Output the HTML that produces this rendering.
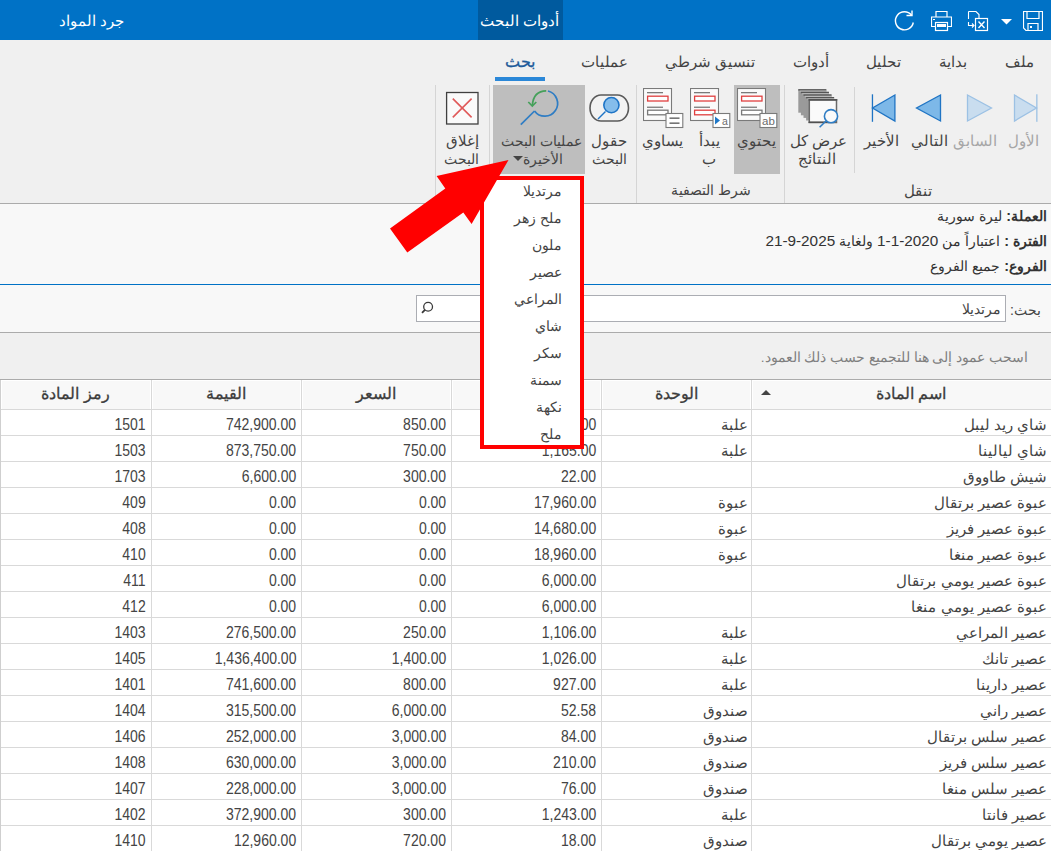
<!DOCTYPE html>
<html><head><meta charset="utf-8"><style>
html,body{margin:0;padding:0;width:1051px;height:851px;overflow:hidden;background:#fff;position:relative;font-family:'Liberation Sans',sans-serif;}
.t{position:absolute;white-space:nowrap;direction:rtl;}
.n{position:absolute;white-space:nowrap;font-size:16px;line-height:18px;color:#444;transform:scaleX(0.875);transform-origin:100% 50%;}
</style></head><body>
<div style="position:absolute;left:0px;top:0px;width:1051px;height:40px;background:#0072C6"></div><div style="position:absolute;left:478px;top:0px;width:85px;height:40px;background:#005A9E"></div><div class="t" style="right:492px;top:12px;font-size:15px;line-height:17px;color:#fff;font-weight:normal;">أدوات البحث</div><div class="t" style="right:927px;top:13px;font-size:14.6px;line-height:16.6px;color:#fff;font-weight:normal;">جرد المواد</div><svg style="position:absolute;left:1023px;top:11px" width="20" height="20" viewBox="0 0 20 20"><path d="M0.5 0.5H19.5V19.5H3L0.5 17Z M4 0.5V7.5H16V0.5 M5 19.5V12.5H15V19.5" fill="none" stroke="#fff" stroke-width="1.2"/><rect x="7" y="15" width="2" height="2" fill="#fff"/></svg><svg style="position:absolute;left:1001px;top:19px" width="11" height="6" viewBox="0 0 11 6"><path d="M0 0H11L5.5 5.5Z" fill="#fff"/></svg><svg style="position:absolute;left:967px;top:10px" width="22" height="22" viewBox="0 0 22 22"><path d="M1.5 1.5H9L12 4.5V9" fill="none" stroke="#fff" stroke-width="1.1"/><path d="M1.5 1.5V9" stroke="#fff" stroke-width="1.1"/><path d="M1.5 12V15.5H6" fill="none" stroke="#fff" stroke-width="1.1"/><path d="M5 13.5L7 15.5L5 17.5" fill="none" stroke="#fff" stroke-width="1.1"/><rect x="8.5" y="8.5" width="12" height="12" fill="#0072C6" stroke="#fff" stroke-width="1.2"/><path d="M11.5 11.5L17.5 18M17.5 11.5L11.5 18" stroke="#fff" stroke-width="1.4"/></svg><svg style="position:absolute;left:931px;top:11px" width="21" height="21" viewBox="0 0 21 21"><path d="M5 6V0.5H16V6" fill="none" stroke="#fff" stroke-width="1.2"/><path d="M4 15.5H0.5V6H20.5V15.5H17" fill="none" stroke="#fff" stroke-width="1.2"/><rect x="4.5" y="11.5" width="12" height="8" fill="none" stroke="#fff" stroke-width="1.2"/><rect x="6" y="13" width="9" height="3" fill="#fff"/><rect x="2" y="8" width="2" height="1" fill="#fff"/></svg><svg style="position:absolute;left:893px;top:10px" width="23" height="23" viewBox="0 0 23 23"><path d="M18.5 5.2A9 9 0 1 0 20.3 12.5" fill="none" stroke="#fff" stroke-width="1.4"/><path d="M13.5 5.5H19V0.5" fill="none" stroke="#fff" stroke-width="1.4"/></svg><div style="position:absolute;left:0px;top:40px;width:1051px;height:163px;background:#F0F0F0"></div><div style="position:absolute;left:0px;top:203px;width:1051px;height:1px;background:#ABABAB"></div><div class="t" style="right:17px;top:53px;font-size:15px;line-height:17px;color:#444;font-weight:normal;">ملف</div><div class="t" style="right:84px;top:53px;font-size:15px;line-height:17px;color:#444;font-weight:normal;">بداية</div><div class="t" style="right:150px;top:53px;font-size:15px;line-height:17px;color:#444;font-weight:normal;">تحليل</div><div class="t" style="right:222px;top:53px;font-size:15px;line-height:17px;color:#444;font-weight:normal;">أدوات</div><div class="t" style="right:296px;top:53px;font-size:15px;line-height:17px;color:#444;font-weight:normal;">تنسيق شرطي</div><div class="t" style="right:423px;top:53px;font-size:15px;line-height:17px;color:#444;font-weight:normal;">عمليات</div><div class="t" style="right:516px;top:53px;font-size:15.5px;line-height:17.5px;color:#1E5B9A;font-weight:normal;-webkit-text-stroke:0.3px #1E5B9A;">بحث</div><div style="position:absolute;left:495px;top:77px;width:50px;height:4px;background:#2B88D8"></div><div style="position:absolute;left:784px;top:85px;width:1px;height:118px;background:#D5D5D5"></div><div style="position:absolute;left:636px;top:85px;width:1px;height:118px;background:#D5D5D5"></div><div style="position:absolute;left:489px;top:85px;width:1px;height:118px;background:#D5D5D5"></div><div style="position:absolute;left:435px;top:85px;width:1px;height:118px;background:#D5D5D5"></div><div style="position:absolute;left:854px;top:87px;width:1px;height:86px;background:#D5D5D5"></div><svg style="position:absolute;left:1013px;top:94px" width="27" height="29" viewBox="0 0 27 29"><path d="M1.5 1L23.5 14L1.5 27Z" fill="#C9DDEF" stroke="#9CC1E4" stroke-width="1.3"/><rect x="23.2" y="0.3" width="1.3" height="27.5" fill="#9CC1E4"/></svg><svg style="position:absolute;left:966px;top:94px" width="27" height="29" viewBox="0 0 27 29"><path d="M1.5 1L25.5 14L1.5 27Z" fill="#C9DDEF" stroke="#9CC1E4" stroke-width="1.3"/></svg><svg style="position:absolute;left:915px;top:94px" width="27" height="29" viewBox="0 0 27 29"><path d="M25.5 1L1.5 14L25.5 27Z" fill="#7DB8E8" stroke="#1F74C4" stroke-width="1.3"/></svg><svg style="position:absolute;left:871px;top:94px" width="27" height="29" viewBox="0 0 27 29"><path d="M23.9 1L1.5 14L23.9 27Z" fill="#7DB8E8" stroke="#1F74C4" stroke-width="1.3"/><rect x="0.8" y="0.3" width="1.3" height="27.5" fill="#1F74C4"/></svg><div class="t" style="right:12px;top:132px;font-size:15px;line-height:17px;color:#A6A6A6;font-weight:normal;">الأول</div><div class="t" style="right:54px;top:132px;font-size:15px;line-height:17px;color:#A6A6A6;font-weight:normal;">السابق</div><div class="t" style="right:103px;top:132px;font-size:15px;line-height:17px;color:#444;font-weight:normal;">التالي</div><div class="t" style="right:152px;top:132px;font-size:15px;line-height:17px;color:#444;font-weight:normal;">الأخير</div><div class="t" style="right:119px;top:182px;font-size:15px;line-height:17px;color:#444;font-weight:normal;">تنقل</div><svg style="position:absolute;left:794px;top:85px" width="50" height="45" viewBox="0 0 50 45"><rect x="4.3" y="4.2" width="28" height="23.5" fill="#9A9A9A"/><rect x="4.3" y="4.2" width="28" height="1.4" fill="#555"/><rect x="5.6" y="5.6" width="26.7" height="1.1" fill="#BDBDBD"/><rect x="6.9" y="6.8" width="28" height="23.5" fill="#9A9A9A"/><rect x="6.9" y="6.8" width="28" height="1.4" fill="#555"/><rect x="8.2" y="8.2" width="26.7" height="1.1" fill="#BDBDBD"/><rect x="9.5" y="9.4" width="28" height="23.5" fill="#9A9A9A"/><rect x="9.5" y="9.4" width="28" height="1.4" fill="#555"/><rect x="10.8" y="10.8" width="26.7" height="1.1" fill="#BDBDBD"/><rect x="12.1" y="12.0" width="28" height="23.5" fill="#9A9A9A"/><rect x="12.1" y="12.0" width="28" height="1.4" fill="#555"/><rect x="13.4" y="13.4" width="26.7" height="1.1" fill="#BDBDBD"/><rect x="15.3" y="14.9" width="27.2" height="22.6" fill="#FAFAFA" stroke="#6A6A6A" stroke-width="1.5"/><rect x="14.5" y="14.1" width="28.8" height="1.5" fill="#505050"/><rect x="14.5" y="36.5" width="20" height="1.5" fill="#505050"/><circle cx="37" cy="31.2" r="6.6" fill="#FAFAFA" stroke="#2F7DC4" stroke-width="1.6"/><path d="M32 36L25.6 42.3" stroke="#2F7DC4" stroke-width="1.6"/></svg><div class="t" style="right:204px;top:132px;font-size:15px;line-height:17px;color:#444;font-weight:normal;">عرض كل</div><div class="t" style="right:215px;top:150px;font-size:15px;line-height:17px;color:#444;font-weight:normal;">النتائج</div><div style="position:absolute;left:734px;top:85px;width:46px;height:89px;background:#BEBEBE"></div><svg style="position:absolute;left:737px;top:88px" width="42" height="42" viewBox="0 0 42 42"><rect x="0.5" y="0.5" width="28" height="32" fill="#FAFAFA" stroke="#7A7A7A" stroke-width="1.1"/>
<rect x="4" y="4" width="16" height="1.3" fill="#7A7A7A"/>
<rect x="4.6" y="8.2" width="20.4" height="4.8" fill="#fff" stroke="#E04040" stroke-width="1.3"/>
<rect x="4" y="18.6" width="16" height="1.3" fill="#7A7A7A"/>
<rect x="4.6" y="22.2" width="20.4" height="4.6" fill="#fff" stroke="#7A7A7A" stroke-width="1.3"/>
<rect x="23" y="25.5" width="16.8" height="14" fill="#fff" stroke="#7A7A7A" stroke-width="1.1"/><text x="31.4" y="37" font-size="11.5" text-anchor="middle" fill="#6A6A6A" font-family="Liberation Sans">ab</text></svg><svg style="position:absolute;left:690px;top:88px" width="42" height="42" viewBox="0 0 42 42"><rect x="0.5" y="0.5" width="28" height="32" fill="#FAFAFA" stroke="#7A7A7A" stroke-width="1.1"/>
<rect x="4" y="4" width="16" height="1.3" fill="#7A7A7A"/>
<rect x="4.6" y="8.2" width="20.4" height="4.8" fill="#fff" stroke="#E04040" stroke-width="1.3"/>
<rect x="4" y="18.6" width="16" height="1.3" fill="#7A7A7A"/>
<rect x="4.6" y="22.2" width="20.4" height="4.6" fill="#fff" stroke="#E04040" stroke-width="1.3"/>
<rect x="23" y="25.5" width="16.8" height="14" fill="#fff" stroke="#7A7A7A" stroke-width="1.1"/><path d="M25 28.5L30 32.5L25 36.5Z" fill="#1F78C8"/><text x="35" y="37" font-size="10.5" text-anchor="middle" fill="#6A6A6A" font-family="Liberation Sans">a</text></svg><svg style="position:absolute;left:643px;top:88px" width="42" height="42" viewBox="0 0 42 42"><rect x="0.5" y="0.5" width="28" height="32" fill="#FAFAFA" stroke="#7A7A7A" stroke-width="1.1"/>
<rect x="4" y="4" width="16" height="1.3" fill="#7A7A7A"/>
<rect x="4.6" y="8.2" width="20.4" height="4.8" fill="#fff" stroke="#E04040" stroke-width="1.3"/>
<rect x="4" y="18.6" width="16" height="1.3" fill="#7A7A7A"/>
<rect x="4.6" y="22.2" width="20.4" height="4.6" fill="#fff" stroke="#7A7A7A" stroke-width="1.3"/>
<rect x="23" y="25.5" width="16.8" height="14" fill="#fff" stroke="#7A7A7A" stroke-width="1.1"/><rect x="26.5" y="29.5" width="10" height="1.3" fill="#555"/><rect x="26.5" y="34.5" width="10" height="1.3" fill="#555"/></svg><div class="t" style="right:275px;top:132px;font-size:15px;line-height:17px;color:#444;font-weight:normal;">يحتوي</div><div class="t" style="right:331px;top:132px;font-size:15px;line-height:17px;color:#444;font-weight:normal;">يبدأ</div><div class="t" style="right:335px;top:150px;font-size:15px;line-height:17px;color:#444;font-weight:normal;">ب</div><div class="t" style="right:368px;top:132px;font-size:15px;line-height:17px;color:#444;font-weight:normal;">يساوي</div><div class="t" style="right:300px;top:182px;font-size:14.1px;line-height:16.1px;color:#444;font-weight:normal;">شرط التصفية</div><svg style="position:absolute;left:585px;top:88px" width="50" height="40" viewBox="0 0 50 40"><rect x="5" y="7" width="38.5" height="26" rx="11" ry="13" fill="#F2F2F2" stroke="#5A5A5A" stroke-width="1.6"/><path d="M20.5 23.5L13 31" stroke="#1E74C6" stroke-width="1.5"/><circle cx="26.4" cy="17.1" r="7.6" fill="#85BDEB" stroke="#1E74C6" stroke-width="1.6"/></svg><div class="t" style="right:424px;top:132px;font-size:15px;line-height:17px;color:#444;font-weight:normal;">حقول</div><div class="t" style="right:424px;top:151px;font-size:14.2px;line-height:16.2px;color:#444;font-weight:normal;">البحث</div><div style="position:absolute;left:493px;top:85px;width:92px;height:89px;background:#BEBEBE"></div><svg style="position:absolute;left:510px;top:85px" width="60" height="45" viewBox="0 0 60 45"><path d="M38 6A12.8 12.8 0 1 1 24.5 26" fill="none" stroke="#2F7DC4" stroke-width="1.7"/><path d="M24.5 26L10.8 39.7" stroke="#2F7DC4" stroke-width="1.7"/><path d="M36.2 5.8Q23.5 6 22.4 20" fill="none" stroke="#45A05A" stroke-width="1.7"/><path d="M18.3 17L22.3 21L26.3 17" fill="none" stroke="#45A05A" stroke-width="1.7"/></svg><div class="t" style="right:469px;top:133px;font-size:14.2px;line-height:16.2px;color:#444;font-weight:normal;">عمليات البحث</div><div class="t" style="right:488px;top:151px;font-size:14.2px;line-height:16.2px;color:#444;font-weight:normal;">الأخيرة</div><svg style="position:absolute;left:513px;top:156px" width="10" height="6" viewBox="0 0 10 6"><path d="M0 0H10L5 5Z" fill="#444"/></svg><svg style="position:absolute;left:445px;top:91px" width="35" height="35" viewBox="0 0 35 35"><rect x="1.6" y="1.5" width="31.4" height="31.5" fill="#FAFAFA" stroke="#404040" stroke-width="1.3"/><path d="M7.8 7.6L26.6 26.4M26.6 7.6L7.8 26.4" stroke="#E05A5A" stroke-width="1.6"/></svg><div class="t" style="right:572px;top:132px;font-size:15px;line-height:17px;color:#444;font-weight:normal;">إغلاق</div><div class="t" style="right:572px;top:151px;font-size:14.2px;line-height:16.2px;color:#444;font-weight:normal;">البحث</div><div style="position:absolute;left:0px;top:204px;width:1051px;height:80px;background:#F8F8F8"></div><div style="position:absolute;left:0px;top:284px;width:1051px;height:1px;background:#0072C6"></div><div class="t" style="right:4px;top:208px;font-size:14.3px;line-height:16px;color:#333"><b>العملة:</b> ليرة سورية</div><div class="t" style="right:4px;top:233px;font-size:14.3px;line-height:16px;color:#333"><b>الفترة :</b> اعتباراً من <span dir="ltr" style="unicode-bidi:isolate;font-size:15.3px">1-1-2020</span> ولغاية <span dir="ltr" style="unicode-bidi:isolate;font-size:15.3px">21-9-2025</span></div><div class="t" style="right:4px;top:258px;font-size:14.3px;line-height:16px;color:#333"><b>الفروع:</b> جميع الفروع</div><div style="position:absolute;left:0px;top:285px;width:1051px;height:47px;background:#F8F8F8"></div><div style="position:absolute;left:0px;top:332px;width:1051px;height:1px;background:#ABABAB"></div><div class="t" style="right:10px;top:302px;font-size:14px;line-height:16px;color:#444;font-weight:normal;">بحث:</div><div style="position:absolute;left:416px;top:295px;width:590px;height:27px;background:#fff;border:1px solid #ABADB3;box-sizing:border-box"></div><div class="t" style="right:50px;top:301px;font-size:14px;line-height:16px;color:#444;font-weight:normal;">مرتديلا</div><svg style="position:absolute;left:420px;top:300px" width="16" height="16" viewBox="0 0 16 16"><circle cx="8.1" cy="6.7" r="4.4" fill="none" stroke="#3A3A3A" stroke-width="1.3"/><path d="M5.2 9.7L2 12.9" stroke="#3A3A3A" stroke-width="1.8"/></svg><div style="position:absolute;left:0px;top:333px;width:1051px;height:46px;background:#F0F0F0"></div><div class="t" style="right:23px;top:350px;font-size:13.6px;line-height:15.6px;color:#7F7F7F;font-weight:normal;">اسحب عمود إلى هنا للتجميع حسب ذلك العمود.</div><div style="position:absolute;left:0px;top:379px;width:1051px;height:1px;background:#ABABAB"></div><div style="position:absolute;left:0px;top:380px;width:1051px;height:29px;background:#F8F8F8"></div><div style="position:absolute;left:0px;top:409px;width:1051px;height:1px;background:#D9D9D9"></div><div style="position:absolute;left:151px;top:380px;width:1px;height:471px;background:#D9D9D9"></div><div style="position:absolute;left:301px;top:380px;width:1px;height:471px;background:#D9D9D9"></div><div style="position:absolute;left:451px;top:380px;width:1px;height:471px;background:#D9D9D9"></div><div style="position:absolute;left:601px;top:380px;width:1px;height:471px;background:#D9D9D9"></div><div style="position:absolute;left:751px;top:380px;width:1px;height:471px;background:#D9D9D9"></div><div class="t" style="left:-74.5px;width:300px;text-align:center;top:385px;font-size:15.5px;line-height:17.5px;color:#3C3C3C;font-weight:normal;-webkit-text-stroke:0.3px #3C3C3C;">رمز المادة</div><div class="t" style="left:76.0px;width:300px;text-align:center;top:385px;font-size:15.5px;line-height:17.5px;color:#3C3C3C;font-weight:normal;-webkit-text-stroke:0.3px #3C3C3C;">القيمة</div><div class="t" style="left:226.0px;width:300px;text-align:center;top:385px;font-size:15.5px;line-height:17.5px;color:#3C3C3C;font-weight:normal;-webkit-text-stroke:0.3px #3C3C3C;">السعر</div><div class="t" style="left:376.0px;width:300px;text-align:center;top:385px;font-size:15.5px;line-height:17.5px;color:#3C3C3C;font-weight:normal;-webkit-text-stroke:0.3px #3C3C3C;">الكمية</div><div class="t" style="left:526.0px;width:300px;text-align:center;top:385px;font-size:15.5px;line-height:17.5px;color:#3C3C3C;font-weight:normal;-webkit-text-stroke:0.3px #3C3C3C;">الوحدة</div><div class="t" style="left:761px;width:300px;text-align:center;top:385px;font-size:15.5px;line-height:17.5px;color:#3C3C3C;font-weight:normal;-webkit-text-stroke:0.3px #3C3C3C;">اسم المادة</div><svg style="position:absolute;left:761px;top:390px" width="10" height="6" viewBox="0 0 10 6"><path d="M0 5L5 0L10 5Z" fill="#444"/></svg><div style="position:absolute;left:0px;top:410px;width:1051px;height:25px;background:#fff"></div><div style="position:absolute;left:0px;top:435px;width:1051px;height:1px;background:#D9D9D9"></div><div class="t" style="right:4px;top:416px;font-size:15px;line-height:17px;color:#444;font-weight:normal;">شاي ريد ليبل</div><div class="t" style="right:303px;top:416px;font-size:15px;line-height:17px;color:#444;font-weight:normal;">علبة</div><div class="n" style="right:905px;top:416px">1501</div><div class="n" style="right:755px;top:416px">742,900.00</div><div class="n" style="right:605px;top:416px">850.00</div><div class="n" style="right:455px;top:416px">1,165.00</div><div style="position:absolute;left:0px;top:436px;width:1051px;height:25px;background:#fff"></div><div style="position:absolute;left:0px;top:461px;width:1051px;height:1px;background:#D9D9D9"></div><div class="t" style="right:4px;top:442px;font-size:15px;line-height:17px;color:#444;font-weight:normal;">شاي ليالينا</div><div class="t" style="right:303px;top:442px;font-size:15px;line-height:17px;color:#444;font-weight:normal;">علبة</div><div class="n" style="right:905px;top:442px">1503</div><div class="n" style="right:755px;top:442px">873,750.00</div><div class="n" style="right:605px;top:442px">750.00</div><div class="n" style="right:455px;top:442px">1,165.00</div><div style="position:absolute;left:0px;top:462px;width:1051px;height:25px;background:#fff"></div><div style="position:absolute;left:0px;top:487px;width:1051px;height:1px;background:#D9D9D9"></div><div class="t" style="right:4px;top:468px;font-size:15px;line-height:17px;color:#444;font-weight:normal;">شيش طاووق</div><div class="n" style="right:905px;top:468px">1703</div><div class="n" style="right:755px;top:468px">6,600.00</div><div class="n" style="right:605px;top:468px">300.00</div><div class="n" style="right:455px;top:468px">22.00</div><div style="position:absolute;left:0px;top:488px;width:1051px;height:25px;background:#fff"></div><div style="position:absolute;left:0px;top:513px;width:1051px;height:1px;background:#D9D9D9"></div><div class="t" style="right:4px;top:494px;font-size:15px;line-height:17px;color:#444;font-weight:normal;">عبوة عصير برتقال</div><div class="t" style="right:303px;top:494px;font-size:15px;line-height:17px;color:#444;font-weight:normal;">عبوة</div><div class="n" style="right:905px;top:494px">409</div><div class="n" style="right:755px;top:494px">0.00</div><div class="n" style="right:605px;top:494px">0.00</div><div class="n" style="right:455px;top:494px">17,960.00</div><div style="position:absolute;left:0px;top:514px;width:1051px;height:25px;background:#fff"></div><div style="position:absolute;left:0px;top:539px;width:1051px;height:1px;background:#D9D9D9"></div><div class="t" style="right:4px;top:520px;font-size:15px;line-height:17px;color:#444;font-weight:normal;">عبوة عصير فريز</div><div class="t" style="right:303px;top:520px;font-size:15px;line-height:17px;color:#444;font-weight:normal;">عبوة</div><div class="n" style="right:905px;top:520px">408</div><div class="n" style="right:755px;top:520px">0.00</div><div class="n" style="right:605px;top:520px">0.00</div><div class="n" style="right:455px;top:520px">14,680.00</div><div style="position:absolute;left:0px;top:540px;width:1051px;height:25px;background:#fff"></div><div style="position:absolute;left:0px;top:565px;width:1051px;height:1px;background:#D9D9D9"></div><div class="t" style="right:4px;top:546px;font-size:15px;line-height:17px;color:#444;font-weight:normal;">عبوة عصير منغا</div><div class="t" style="right:303px;top:546px;font-size:15px;line-height:17px;color:#444;font-weight:normal;">عبوة</div><div class="n" style="right:905px;top:546px">410</div><div class="n" style="right:755px;top:546px">0.00</div><div class="n" style="right:605px;top:546px">0.00</div><div class="n" style="right:455px;top:546px">18,960.00</div><div style="position:absolute;left:0px;top:566px;width:1051px;height:25px;background:#fff"></div><div style="position:absolute;left:0px;top:591px;width:1051px;height:1px;background:#D9D9D9"></div><div class="t" style="right:4px;top:572px;font-size:15px;line-height:17px;color:#444;font-weight:normal;">عبوة عصير يومي برتقال</div><div class="n" style="right:905px;top:572px">411</div><div class="n" style="right:755px;top:572px">0.00</div><div class="n" style="right:605px;top:572px">0.00</div><div class="n" style="right:455px;top:572px">6,000.00</div><div style="position:absolute;left:0px;top:592px;width:1051px;height:25px;background:#fff"></div><div style="position:absolute;left:0px;top:617px;width:1051px;height:1px;background:#D9D9D9"></div><div class="t" style="right:4px;top:598px;font-size:15px;line-height:17px;color:#444;font-weight:normal;">عبوة عصير يومي منغا</div><div class="n" style="right:905px;top:598px">412</div><div class="n" style="right:755px;top:598px">0.00</div><div class="n" style="right:605px;top:598px">0.00</div><div class="n" style="right:455px;top:598px">6,000.00</div><div style="position:absolute;left:0px;top:618px;width:1051px;height:25px;background:#fff"></div><div style="position:absolute;left:0px;top:643px;width:1051px;height:1px;background:#D9D9D9"></div><div class="t" style="right:4px;top:624px;font-size:15px;line-height:17px;color:#444;font-weight:normal;">عصير المراعي</div><div class="t" style="right:303px;top:624px;font-size:15px;line-height:17px;color:#444;font-weight:normal;">علبة</div><div class="n" style="right:905px;top:624px">1403</div><div class="n" style="right:755px;top:624px">276,500.00</div><div class="n" style="right:605px;top:624px">250.00</div><div class="n" style="right:455px;top:624px">1,106.00</div><div style="position:absolute;left:0px;top:644px;width:1051px;height:25px;background:#fff"></div><div style="position:absolute;left:0px;top:669px;width:1051px;height:1px;background:#D9D9D9"></div><div class="t" style="right:4px;top:650px;font-size:15px;line-height:17px;color:#444;font-weight:normal;">عصير تانك</div><div class="t" style="right:303px;top:650px;font-size:15px;line-height:17px;color:#444;font-weight:normal;">علبة</div><div class="n" style="right:905px;top:650px">1405</div><div class="n" style="right:755px;top:650px">1,436,400.00</div><div class="n" style="right:605px;top:650px">1,400.00</div><div class="n" style="right:455px;top:650px">1,026.00</div><div style="position:absolute;left:0px;top:670px;width:1051px;height:25px;background:#fff"></div><div style="position:absolute;left:0px;top:695px;width:1051px;height:1px;background:#D9D9D9"></div><div class="t" style="right:4px;top:676px;font-size:15px;line-height:17px;color:#444;font-weight:normal;">عصير دارينا</div><div class="t" style="right:303px;top:676px;font-size:15px;line-height:17px;color:#444;font-weight:normal;">علبة</div><div class="n" style="right:905px;top:676px">1401</div><div class="n" style="right:755px;top:676px">741,600.00</div><div class="n" style="right:605px;top:676px">800.00</div><div class="n" style="right:455px;top:676px">927.00</div><div style="position:absolute;left:0px;top:696px;width:1051px;height:25px;background:#fff"></div><div style="position:absolute;left:0px;top:721px;width:1051px;height:1px;background:#D9D9D9"></div><div class="t" style="right:4px;top:702px;font-size:15px;line-height:17px;color:#444;font-weight:normal;">عصير راني</div><div class="t" style="right:303px;top:702px;font-size:15px;line-height:17px;color:#444;font-weight:normal;">صندوق</div><div class="n" style="right:905px;top:702px">1404</div><div class="n" style="right:755px;top:702px">315,500.00</div><div class="n" style="right:605px;top:702px">6,000.00</div><div class="n" style="right:455px;top:702px">52.58</div><div style="position:absolute;left:0px;top:722px;width:1051px;height:25px;background:#fff"></div><div style="position:absolute;left:0px;top:747px;width:1051px;height:1px;background:#D9D9D9"></div><div class="t" style="right:4px;top:728px;font-size:15px;line-height:17px;color:#444;font-weight:normal;">عصير سلس برتقال</div><div class="t" style="right:303px;top:728px;font-size:15px;line-height:17px;color:#444;font-weight:normal;">صندوق</div><div class="n" style="right:905px;top:728px">1406</div><div class="n" style="right:755px;top:728px">252,000.00</div><div class="n" style="right:605px;top:728px">3,000.00</div><div class="n" style="right:455px;top:728px">84.00</div><div style="position:absolute;left:0px;top:748px;width:1051px;height:25px;background:#fff"></div><div style="position:absolute;left:0px;top:773px;width:1051px;height:1px;background:#D9D9D9"></div><div class="t" style="right:4px;top:754px;font-size:15px;line-height:17px;color:#444;font-weight:normal;">عصير سلس فريز</div><div class="t" style="right:303px;top:754px;font-size:15px;line-height:17px;color:#444;font-weight:normal;">صندوق</div><div class="n" style="right:905px;top:754px">1408</div><div class="n" style="right:755px;top:754px">630,000.00</div><div class="n" style="right:605px;top:754px">3,000.00</div><div class="n" style="right:455px;top:754px">210.00</div><div style="position:absolute;left:0px;top:774px;width:1051px;height:25px;background:#fff"></div><div style="position:absolute;left:0px;top:799px;width:1051px;height:1px;background:#D9D9D9"></div><div class="t" style="right:4px;top:780px;font-size:15px;line-height:17px;color:#444;font-weight:normal;">عصير سلس منغا</div><div class="t" style="right:303px;top:780px;font-size:15px;line-height:17px;color:#444;font-weight:normal;">صندوق</div><div class="n" style="right:905px;top:780px">1407</div><div class="n" style="right:755px;top:780px">228,000.00</div><div class="n" style="right:605px;top:780px">3,000.00</div><div class="n" style="right:455px;top:780px">76.00</div><div style="position:absolute;left:0px;top:800px;width:1051px;height:25px;background:#fff"></div><div style="position:absolute;left:0px;top:825px;width:1051px;height:1px;background:#D9D9D9"></div><div class="t" style="right:4px;top:806px;font-size:15px;line-height:17px;color:#444;font-weight:normal;">عصير فانتا</div><div class="t" style="right:303px;top:806px;font-size:15px;line-height:17px;color:#444;font-weight:normal;">علبة</div><div class="n" style="right:905px;top:806px">1402</div><div class="n" style="right:755px;top:806px">372,900.00</div><div class="n" style="right:605px;top:806px">300.00</div><div class="n" style="right:455px;top:806px">1,243.00</div><div style="position:absolute;left:0px;top:826px;width:1051px;height:25px;background:#fff"></div><div style="position:absolute;left:0px;top:851px;width:1051px;height:1px;background:#D9D9D9"></div><div class="t" style="right:4px;top:832px;font-size:15px;line-height:17px;color:#444;font-weight:normal;">عصير يومي برتقال</div><div class="t" style="right:303px;top:832px;font-size:15px;line-height:17px;color:#444;font-weight:normal;">صندوق</div><div class="n" style="right:905px;top:832px">1410</div><div class="n" style="right:755px;top:832px">12,960.00</div><div class="n" style="right:605px;top:832px">720.00</div><div class="n" style="right:455px;top:832px">18.00</div><div style="position:absolute;left:151px;top:409px;width:1px;height:442px;background:#D9D9D9"></div><div style="position:absolute;left:301px;top:409px;width:1px;height:442px;background:#D9D9D9"></div><div style="position:absolute;left:451px;top:409px;width:1px;height:442px;background:#D9D9D9"></div><div style="position:absolute;left:601px;top:409px;width:1px;height:442px;background:#D9D9D9"></div><div style="position:absolute;left:751px;top:409px;width:1px;height:442px;background:#D9D9D9"></div><div style="position:absolute;left:0px;top:380px;width:1px;height:471px;background:#CFCFCF"></div><div style="position:absolute;left:1px;top:380px;width:1050px;height:1px;background:#FFFFFF"></div><div style="position:absolute;left:150px;top:381px;width:1px;height:28px;background:#FFFFFF"></div><div style="position:absolute;left:152px;top:381px;width:1px;height:28px;background:#FFFFFF"></div><div style="position:absolute;left:151px;top:380px;width:1px;height:29px;background:#D9D9D9"></div><div style="position:absolute;left:300px;top:381px;width:1px;height:28px;background:#FFFFFF"></div><div style="position:absolute;left:302px;top:381px;width:1px;height:28px;background:#FFFFFF"></div><div style="position:absolute;left:301px;top:380px;width:1px;height:29px;background:#D9D9D9"></div><div style="position:absolute;left:450px;top:381px;width:1px;height:28px;background:#FFFFFF"></div><div style="position:absolute;left:452px;top:381px;width:1px;height:28px;background:#FFFFFF"></div><div style="position:absolute;left:451px;top:380px;width:1px;height:29px;background:#D9D9D9"></div><div style="position:absolute;left:600px;top:381px;width:1px;height:28px;background:#FFFFFF"></div><div style="position:absolute;left:602px;top:381px;width:1px;height:28px;background:#FFFFFF"></div><div style="position:absolute;left:601px;top:380px;width:1px;height:29px;background:#D9D9D9"></div><div style="position:absolute;left:750px;top:381px;width:1px;height:28px;background:#FFFFFF"></div><div style="position:absolute;left:752px;top:381px;width:1px;height:28px;background:#FFFFFF"></div><div style="position:absolute;left:751px;top:380px;width:1px;height:29px;background:#D9D9D9"></div><div style="position:absolute;left:1px;top:381px;width:1px;height:28px;background:#FFFFFF"></div><div style="position:absolute;left:480px;top:176px;width:104px;height:273px;background:#fff;border:4px solid #FF0000;box-sizing:border-box"></div><div class="t" style="right:489px;top:183px;font-size:14px;line-height:16px;color:#444;font-weight:normal;">مرتديلا</div><div class="t" style="right:489px;top:210px;font-size:14px;line-height:16px;color:#444;font-weight:normal;">ملح زهر</div><div class="t" style="right:489px;top:237px;font-size:14px;line-height:16px;color:#444;font-weight:normal;">ملون</div><div class="t" style="right:489px;top:264px;font-size:14px;line-height:16px;color:#444;font-weight:normal;">عصير</div><div class="t" style="right:489px;top:291px;font-size:14px;line-height:16px;color:#444;font-weight:normal;">المراعي</div><div class="t" style="right:489px;top:318px;font-size:14px;line-height:16px;color:#444;font-weight:normal;">شاي</div><div class="t" style="right:489px;top:345px;font-size:14px;line-height:16px;color:#444;font-weight:normal;">سكر</div><div class="t" style="right:489px;top:372px;font-size:14px;line-height:16px;color:#444;font-weight:normal;">سمنة</div><div class="t" style="right:489px;top:399px;font-size:14px;line-height:16px;color:#444;font-weight:normal;">نكهة</div><div class="t" style="right:489px;top:426px;font-size:14px;line-height:16px;color:#444;font-weight:normal;">ملح</div><svg style="position:absolute;left:380px;top:150px" width="140" height="110" viewBox="0 0 140 110"><path d="M128.5 10L56.6 26L65.3 38.6L10 78.6L27.3 102.6L83.3 62.6L91.6 74Z" fill="#FF0000"/></svg>
</body></html>
